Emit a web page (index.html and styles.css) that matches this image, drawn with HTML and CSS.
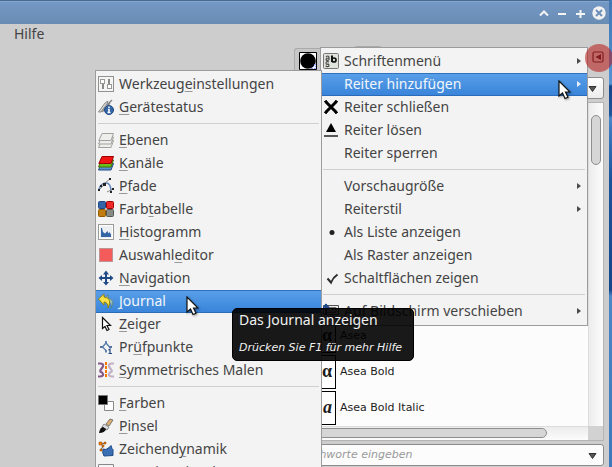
FILE: index.html
```html
<!DOCTYPE html>
<html lang="de">
<head>
<meta charset="utf-8">
<title>Reiter hinzufügen</title>
<link rel="stylesheet" href="styles.css">
</head>
<body>
<div class="window">
  <header class="titlebar">
    <button aria-label="Einrollen"><svg width="12" height="12" viewBox="0 0 12 12"><path d="M2 8.500 L6 4.500 L10 8.500" fill="none" stroke="#f4f4f4" stroke-width="2"/></svg></button>
    <button aria-label="Minimieren"><svg width="12" height="12" viewBox="0 0 12 12"><path d="M2 7h8" stroke="#f4f4f4" stroke-width="2"/></svg></button>
    <button aria-label="Maximieren"><svg width="12" height="12" viewBox="0 0 12 12"><path d="M2 7h9M6.500 3v8" stroke="#f4f4f4" stroke-width="2"/></svg></button>
    <button aria-label="Schließen"><svg width="14" height="14" viewBox="0 0 14 14"><circle cx="7" cy="7" r="6.700" fill="#f1f1f1"/><path d="M4 4l6 6M10 4l-6 6" stroke="#6d90ba" stroke-width="2"/></svg></button>
  </header>
  <nav class="menubar"><button>Hilfe</button></nav>
  <div class="workspace">
    <main class="canvas"></main>
    <aside class="dock">
      <div class="tabs">
        <button class="tab" aria-label="Pinsel"><svg width="18" height="18" viewBox="0 0 18 18"><path d="M.5.5h17v17h-17z" fill="#fff" stroke="#000"/><circle cx="9" cy="9" r="7.800" fill="#000"/><path d="M15 12h2v1h-2zM14 14h1v1h-1zM16 14h1v1h-1zM12 16h2v1h-2zM15 16h2v1h-2z" fill="#8c9cff"/></svg></button>
        <button class="tab tab-active" aria-label="Schriften"></button>
        <button class="dock-menu" aria-label="Reitermenü"><svg width="12" height="12" viewBox="0 0 12 12"><rect x="1" y="1" width="10" height="10" rx="1.500" fill="none" stroke="#44272a" stroke-width="1.200"/><path d="M9 3v6L3.500 6z" fill="#44272a"/></svg></button>
      </div>
      <div class="combo filter">
        <input aria-label="Filter">
        <button aria-label="Filterliste"><svg width="9" height="6" viewBox="0 0 9 6"><path d="M1 .5h7L4.500 5.500z" fill="#555" stroke="#333"/></svg></button>
      </div>
      <div class="fonts">
        <ul class="list">
          <li><span class="preview">α</span>Asea</li>
          <li><span class="preview">α</span>Asea Bold</li>
          <li><span class="preview slanted">a</span>Asea Bold Italic</li>
        </ul>
        <div class="vbar"><span></span></div>
        <div class="hbar"><span></span></div>
        <div class="corner"></div>
      </div>
      <div class="combo tags">
        <input aria-label="Stichworte" placeholder="Stichworte eingeben">
        <button aria-label="Stichwortliste"><svg width="9" height="6" viewBox="0 0 9 6"><path d="M1 .5h7L4.500 5.500z" fill="#555" stroke="#333"/></svg></button>
      </div>
    </aside>
  </div>
</div>

<div class="menu menu-tab" role="menu">
  <button role="menuitem"><span class="icon"><svg width="16" height="16" viewBox="0 0 16 16"><rect x=".5" y=".5" width="15" height="15" rx="1" fill="#e0e2dc" stroke="#777"/><path d="M3 4q2-2 3 0v3M6 5q-3 0-3 1.500t3 .5M6 9q-3-1-3 1t2 1q2 2 0 2.500t-2-1" fill="none" stroke="#444" stroke-width="1.100"/><path d="M9 2.500v6.500" stroke="#111" stroke-width="2"/><circle cx="11" cy="7" r="2" fill="none" stroke="#111" stroke-width="1.700"/></svg></span><span class="text">Schriftenmenü</span><i class="arrow"></i></button>
  <button role="menuitem" class="selected"><span class="icon"></span><span class="text">Reiter hinzufügen</span><i class="arrow"></i></button>
  <button role="menuitem"><span class="icon"><svg width="16" height="16" viewBox="0 0 16 16"><path d="M3 3l10 10M13 3L3 13" stroke="#000" stroke-width="3" stroke-linecap="round"/><path d="M1.500 2.500l2-1 1 3zM14.500 2.500l-2-1-1 3zM1.500 13.500l2 1 1-3zM14.500 13.500l-2 1-1-3z" stroke="#000" stroke-linejoin="round"/></svg></span><span class="text">Reiter schließen</span></button>
  <button role="menuitem"><span class="icon"><svg width="16" height="16" viewBox="0 0 16 16"><path d="M8 1l5 9H3z" fill="#000"/><path d="M1 13h14v2H1z" fill="#555753"/></svg></span><span class="text">Reiter lösen</span></button>
  <button role="menuitem"><span class="icon"></span><span class="text">Reiter sperren</span></button>
  <hr>
  <button role="menuitem"><span class="icon"></span><span class="text">Vorschaugröße</span><i class="arrow"></i></button>
  <button role="menuitem"><span class="icon"></span><span class="text">Reiterstil</span><i class="arrow"></i></button>
  <button role="menuitemradio" aria-checked="true"><span class="icon"><svg width="16" height="16" viewBox="0 0 16 16"><circle cx="9" cy="8.500" r="2.500" fill="#222"/></svg></span><span class="text">Als Liste anzeigen</span></button>
  <button role="menuitemradio" aria-checked="false"><span class="icon"></span><span class="text">Als Raster anzeigen</span></button>
  <button role="menuitemcheckbox" aria-checked="true"><span class="icon"><svg width="16" height="16" viewBox="0 0 16 16"><path d="M4.500 8.500l3.500 4Q10 7.500 14.500 4.500" fill="none" stroke="#2b2b2b" stroke-width="2"/></svg></span><span class="text">Schaltflächen zeigen</span></button>
  <hr>
  <button role="menuitem"><span class="icon"><svg width="16" height="16" viewBox="0 0 16 16"><path d="M.5 2.500h15v9H.5z" fill="#eee" stroke="#555"/><path d="M3 4.500h10v5H3z" fill="#ccc" stroke="#777"/><path d="M5 14h7M8 12v2" stroke="#555"/><path d="M3 1v10M0 5l3-3 3 3" fill="none" stroke="#204a87" stroke-width="2"/></svg></span><span class="text">Auf Bildschirm verschieben</span><i class="arrow"></i></button>
</div>

<div class="menu menu-dialogs" role="menu">
  <button role="menuitem"><span class="icon"><svg width="16" height="16" viewBox="0 0 16 16"><rect x=".5" y=".5" width="15" height="15" fill="#f5f5f3" stroke="#909090"/><path d="M5 6v7M11 3v7" stroke="#666" stroke-width="1.500"/><rect x="2.500" y="3.500" width="4" height="4" fill="#fff" stroke="#999"/><rect x="9.500" y="8.500" width="4" height="4" fill="#fff" stroke="#999"/></svg></span><span class="text">Werkzeug<u>e</u>instellungen</span></button>
  <button role="menuitem"><span class="icon"><svg width="16" height="16" viewBox="0 0 16 16"><path d="M.5 13L7 4l3-2-1 3-6 8z" fill="#d3d7cf" stroke="#888"/><path d="M9 6l5-5M4 13l8-9" stroke="#888" stroke-width="1.500"/><circle cx="11" cy="11" r="4.500" fill="#3465a4" stroke="#204a87"/><path d="M11 7.500V9M10 10.500h1v3M9.500 13.500h3" fill="none" stroke="#fff" stroke-width="1.500"/></svg></span><span class="text"><u>G</u>erätestatus</span></button>
  <hr>
  <button role="menuitem"><span class="icon"><svg width="16" height="16" viewBox="0 0 16 16"><g fill="#eeeeec" stroke="#a0a29d" stroke-linejoin="round"><path d="M3.500 8.500h12l-2.500 7H.5z"/><path d="M3.500 5h12L13 12H.5z"/><path d="M4 1.500h11.500L13 8.500H.8z"/></g></svg></span><span class="text"><u>E</u>benen</span></button>
  <button role="menuitem"><span class="icon"><svg width="16" height="16" viewBox="0 0 16 16"><g stroke-linejoin="round"><path d="M3.500 8.500h12l-2.500 6.500H.5z" fill="#5c8fcf" stroke="#204a87"/><path d="M3.500 5h12L13 12H.5z" fill="#6cc01a" stroke="#3d7004"/><path d="M4 1.500h11.500L13 8.500H.8z" fill="#ef1515" stroke="#a00000"/></g></svg></span><span class="text"><u>K</u>anäle</span></button>
  <button role="menuitem"><span class="icon"><svg width="16" height="16" viewBox="0 0 16 16"><path d="M1 11Q3 5 8 5t5 9" fill="none" stroke="#5d86bd" stroke-width="1.500"/><path d="M3 8l9-7M1 12l5-5M9 14l6-3" fill="none" stroke="#888"/><path d="M11 0h2v2h-2zM5 5h3v3H5zM0 11h2v2H0zM14 10h2v2h-2zM12 13h2v2h-2zM2 7h2v2H2z" fill="#222"/></svg></span><span class="text"><u>P</u>fade</span></button>
  <button role="menuitem"><span class="icon"><svg width="16" height="16" viewBox="0 0 16 16"><rect x=".5" y=".5" width="7" height="7" rx="1" fill="#3465a4" stroke="#204a87"/><rect x="8.500" y=".5" width="7" height="7" rx="1" fill="#ef2929" stroke="#a40000"/><rect x=".5" y="8.500" width="7" height="7" rx="1" fill="#c17d11" stroke="#8f5902"/><rect x="8.500" y="8.500" width="7" height="7" rx="1" fill="#888a85" stroke="#555753"/></svg></span><span class="text">Farb<u>t</u>abelle</span></button>
  <button role="menuitem"><span class="icon"><svg width="16" height="16" viewBox="0 0 16 16"><rect x=".5" y=".5" width="15" height="15" fill="#fff" stroke="#999b96"/><rect x="2" y="2" width="12" height="12" fill="#eceef2"/><path d="M3 13V4h1l1 4 2 1.500L9.500 7l1 2.500 1-1.500 1.500 2.500V13z" fill="#3465a4"/></svg></span><span class="text"><u>H</u>istogramm</span></button>
  <button role="menuitem"><span class="icon"><svg width="16" height="16" viewBox="0 0 16 16"><path d="M2 2h12v12H2z" fill="#f45b5b"/><path d="M1.500 1.500h13v13h-13z" fill="none" stroke="#833" stroke-dasharray="1 1"/></svg></span><span class="text">Auswahl<u>e</u>ditor</span></button>
  <button role="menuitem"><span class="icon"><svg width="16" height="16" viewBox="0 0 16 16"><path d="M8 .5l3 4H9V7h3V5l3.500 3-3.500 3V9H9v3h2l-3 3.500L5 12h2V9H4v2L.5 8 4 5v2h3V4.500H5z" fill="#204a87"/></svg></span><span class="text"><u>N</u>avigation</span></button>
  <button role="menuitem" class="selected"><span class="icon"><svg width="16" height="16" viewBox="0 0 16 16"><path d="M5 6l5-4v3q8 2 3 10 1-6-3-6v3z" fill="#9cc0b4" stroke="#4f7e91" stroke-width=".8"/><path d="M.5 6L6 1v3q9 1 4 11 0-6-4-6v3z" fill="#f5e14b" stroke="#8f7c00" stroke-width=".9"/></svg></span><span class="text"><u>J</u>ournal</span></button>
  <button role="menuitem"><span class="icon"><svg width="16" height="16" viewBox="0 0 16 16"><path d="M4.500 1.500v11l2.500-2 2 4 2-1-2-4h3.500z" fill="#fff" stroke="#111" stroke-width="1.200"/></svg></span><span class="text"><u>Z</u>eiger</span></button>
  <button role="menuitem"><span class="icon"><svg width="16" height="16" viewBox="0 0 16 16"><path d="M8 2v2.500M2 8h3M11 8h3M8 11v2.500" stroke="#204a87" stroke-width="1.300"/><path d="M8 4L4.500 8 8 11.500M8 4l3.500 4" fill="none" stroke="#557ba8" stroke-width="1.300"/><path d="M10.500 11l1.500-1v4.500M10.500 14.500h3.500" fill="none" stroke="#204a87" stroke-width="1.200"/></svg></span><span class="text">Pr<u>ü</u>fpunkte</span></button>
  <button role="menuitem"><span class="icon"><svg width="16" height="16" viewBox="0 0 16 16"><path d="M0 1.500h2q4 0 3 3L2.500 8q-1 2 1.500 2.500 3 3.500-2 4H0" fill="none" stroke="#855a8b" stroke-width="2.200"/><path d="M16 1.500h-2q-4 0-3 3L13.500 8q1 2-1.500 2.500-3 3.500 2 4h2" fill="none" stroke="#c3b0c6" stroke-width="2.200"/><path d="M8 0v16" stroke="#f57900" stroke-width="2" stroke-dasharray="3 1"/></svg></span><span class="text"><u>S</u>ymmetrisches Malen</span></button>
  <hr>
  <button role="menuitem"><span class="icon"><svg width="16" height="16" viewBox="0 0 16 16"><path d="M6.500 6.500h9v9h-9z" fill="#fff" stroke="#888"/><path d="M.5.500h9v9h-9z" fill="#000" stroke="#777"/></svg></span><span class="text"><u>F</u>arben</span></button>
  <button role="menuitem"><span class="icon"><svg width="16" height="16" viewBox="0 0 16 16"><path d="M8 6l4-5 3 1-4 6z" fill="#e0ad6a" stroke="#777"/><path d="M6 6l5 3-2 3-5-3z" fill="#ddd" stroke="#888"/><path d="M1 15q1-6 4-6l3 2q-1 4-7 4z" fill="#111"/></svg></span><span class="text"><u>P</u>insel</span></button>
  <button role="menuitem"><span class="icon"><svg width="16" height="16" viewBox="0 0 16 16"><path d="M5 8l3 .5 3-2 2-2 1 3 1 1v6l-9 .5q-2-3-1-7z" fill="#3b6fb4" stroke="#204a87"/><path d="M2 2l3 3-2 4M4 3l4-1" fill="none" stroke="#555"/><path d="M1 1h3v3H1zM6 1h2v2H6zM4 4h2v2H4zM2 8h2v2H2z" fill="#f57900" stroke="#8f4902" stroke-width=".5"/></svg></span><span class="text">Zeichend<u>y</u>namik</span></button>
  <button role="menuitem"><span class="icon"><svg width="16" height="16" viewBox="0 0 16 16"><path d="M.5.500h15v15H.5z" fill="#f5f5f8" stroke="#888"/></svg></span><span class="text">MyPaint-Pinsel</span></button>
</div>

<div class="tooltip" role="tooltip">
  <p>Das Journal anzeigen</p>
  <p class="hint">Drücken Sie F1 für mehr Hilfe</p>
</div>
<div class="marker"></div>
<svg class="pointer pointer-tab" width="13" height="20" viewBox="0 0 13 20"><path d="M1 1v15l3.500-3 2.500 5.500 3-1.300L7.500 12H12z" fill="#fff" stroke="#111" stroke-width="1.200"/></svg>
<svg class="pointer pointer-dialogs" width="13" height="20" viewBox="0 0 13 20"><path d="M1 1v15l3.500-3 2.500 5.500 3-1.300L7.500 12H12z" fill="#fff" stroke="#111" stroke-width="1.200"/></svg>
</body>
</html>
```
FILE: styles.css
```css
* { box-sizing: border-box; }

body {
  margin: 0;
  height: 100vh;
  overflow: hidden;
  position: relative;
  background: linear-gradient(#3f76b4, #5593d6 84px, #11458c 86px, #1d559e 115px, #4a86cc 118px, #3a78c2 130px, #1a529c 180px, #12468c 290px, #4a86c8 296px, #3a78bd);
  font: 14px/22px "Noto Sans", sans-serif;
  color: #444;
}

button {
  margin: 0;
  padding: 0;
  border: 0;
  background: none;
  font: inherit;
  color: inherit;
}

ul, p { margin: 0; padding: 0; list-style: none; }
svg { display: block; }

.window {
  height: 100%;
  margin-right: 3px;
  display: flex;
  flex-direction: column;
  background: #cdcdcd;
}

.titlebar {
  height: 24px;
  flex: none;
  display: flex;
  align-items: center;
  justify-content: flex-end;
  gap: 6px;
  padding-right: 3px;
  border-top: 1px solid #4a6990;
  box-shadow: inset 0 1px #84a8d4;
  background: linear-gradient(#7499c5, #698cb3);
}

.menubar { height: 20px; flex: none; display: flex; align-items: center; padding-left: 14px; }

.workspace { flex: 1; min-height: 0; display: flex; }
.canvas { flex: 1; }

.dock {
  width: 315px;
  display: flex;
  flex-direction: column;
  padding: 0 5px 1px 0;
}

.tabs { height: 29px; flex: none; display: flex; padding-top: 2px; }
.tab { width: 60px; height: 25px; padding: 3px 4px; border: 1px solid #aaa; border-bottom: 0; border-radius: 3px 3px 0 0; margin-top: 2px; background: #c6c6c6; }
.tab-active { width: 28px; height: 27px; margin-top: 0; background: #dcdcdc; }
.dock-menu { margin: 5px 0 auto auto; }

.combo {
  height: 22px;
  flex: none;
  display: flex;
  align-items: center;
  border: 1px solid #8c8c8c;
  border-radius: 3px;
  background: #fcfcfc;
}
.combo input {
  flex: 1;
  min-width: 0;
  border: 0;
  padding: 0 4px;
  background: none;
  font: italic 11px/18px "DejaVu Sans", sans-serif;
}
.combo input::placeholder { color: #999; opacity: 1; }
.combo button { padding: 1px 6px 0; }
.filter { margin-top: 4px; background: linear-gradient(#fdfdfd, #ececec); }
.tags { margin-top: 3px; }

.fonts {
  flex: 1;
  min-height: 0;
  margin-top: 3px;
  display: grid;
  grid-template: minmax(0, 1fr) 14px / 1fr 15px;
  border: 1px solid #b4b4b4;
  background: #fcfcfc;
}
.list { display: flex; flex-direction: column; justify-content: flex-end; overflow: hidden; }
.list li {
  display: flex;
  align-items: center;
  gap: 4px;
  height: 36px;
  padding-left: 7px;
  font: 11px/16px "DejaVu Sans", sans-serif;
  color: #1c1c1c;
}
.preview {
  width: 34px;
  height: 34px;
  padding-right: 3px;
  border: 1px solid #000;
  background: #fff;
  text-align: right;
  font: bold 18px/30px "Liberation Serif", serif;
}
.slanted { font-style: italic; }
.vbar { border-left: 1px solid #ddd; background: linear-gradient(90deg, #ececec, #fcfcfc); padding: 12px 2px; }
.vbar span, .hbar span { display: block; border: 1px solid #8e8e8e; border-radius: 5px; background: #d6d6d6; }
.vbar span { height: 50px; width: 10px; }
.hbar { border-top: 1px solid #ddd; padding: 1px 41px 0 0; background: linear-gradient(#ececec, #fcfcfc); }
.hbar span { height: 10px; }
.corner { background: #d2d2d2; }

.menu {
  position: absolute;
  padding: 2px 0;
  border: 1px solid #9c9c9c;
  background: #f3f3f3;
}
.menu-tab { left: 320px; top: 47px; width: 268px; }
.menu-dialogs { left: 95px; top: 70px; width: 227px; }
.menu button {
  width: 100%;
  height: 23px;
  display: flex;
  align-items: center;
  gap: 5px;
  padding: 0 6px 1px 2px;
  text-align: left;
}
.menu .text { flex: 1; white-space: nowrap; }
.menu .icon { width: 16px; height: 16px; }
.menu hr { height: 10px; margin: 0 2px; border: 0; background: linear-gradient(#cfcfcf, #cfcfcf) 0 4px / 100% 1px no-repeat; }
.menu u { text-decoration: underline 1px #999; text-underline-offset: 2px; }
.menu .selected {
  color: #f2f6fb;
  background: linear-gradient(#5a9fe8, #3884da);
  box-shadow: inset 0 1px #2f72c0, inset 0 -1px #2a6cb8;
}
.menu .selected u { text-decoration-color: #c4dcf5; }
.arrow { border: 3px solid transparent; border-left: 4px solid #4a4a4a; border-right: 0; }
.selected .arrow { border-left-color: #e8f0fa; }

.tooltip {
  position: absolute;
  left: 232px;
  top: 308px;
  width: 182px;
  padding: 1px 6px 2px;
  border: 1px solid #000;
  border-radius: 5px;
  background: rgba(0, 0, 0, .9);
  color: #f0f0f0;
  white-space: nowrap;
}
.tooltip p { line-height: 20px; }
.tooltip .hint { margin-top: 8px; font: italic 11px/20px "DejaVu Sans", sans-serif; }

.marker {
  position: absolute;
  left: 585px;
  top: 44px;
  width: 28px;
  height: 28px;
  border-radius: 50%;
  background: rgba(182, 20, 20, .55);
}

.pointer { position: absolute; filter: drop-shadow(1px 1px 1px rgba(0, 0, 0, .4)); }
.pointer-tab { left: 558px; top: 80px; }
.pointer-dialogs { left: 186px; top: 296px; }
```
